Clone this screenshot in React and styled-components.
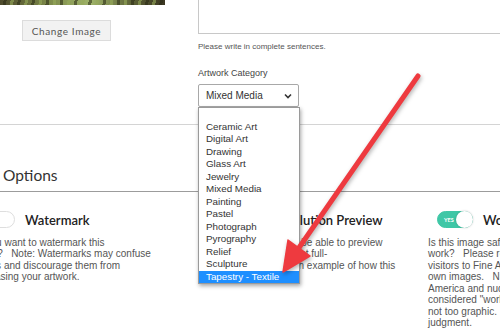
import React from "react"
import styled, { createGlobalStyle } from "styled-components"

const Global = createGlobalStyle`
  html, body {
    margin: 0;
    padding: 0;
    background: #fff;
    overflow: hidden;
  }
  body {
    font-family: "Liberation Sans", Arial, sans-serif;
  }
`

const Frame = styled.div`
  position: relative;
  width: 500px;
  height: 328px;
  overflow: hidden;
`

const TopSection = styled.section`
  margin-top: -60px;
  display: grid;
  grid-template-columns: 198px 1fr;
  padding-bottom: 17px;
  border-bottom: 1px solid #d4d4d4;
`

const ImageCol = styled.div`
  display: flex;
  flex-direction: column;
  align-items: flex-start;
`

const ArtImage = styled.div`
  width: 165px;
  height: 65px;
  background:
    repeating-linear-gradient(
      100deg,
      rgba(40, 40, 20, 0.55) 0 3px,
      transparent 3px 7px,
      rgba(150, 170, 90, 0.6) 7px 10px,
      transparent 10px 14px
    ),
    linear-gradient(90deg, #4d4a2c, #7d8a4a 30%, #9fb36a 55%, #5c6136 80%, #3b3622);
`

const GreyButton = styled.button`
  margin: 15px 0 0 22px;
  width: 89px;
  height: 21px;
  padding: 0;
  background: #f2f2f2;
  border: 1px solid #dcdcdc;
  color: #555;
  font-family: Lato, "Open Sans", sans-serif;
  font-size: 10px;
  letter-spacing: 0.6px;
`

const FormCol = styled.div`
  display: flex;
  flex-direction: column;
  align-items: flex-start;
`

const TextArea = styled.div`
  width: 340px;
  height: 94px;
  box-sizing: border-box;
  border: 1px solid #c8c8c8;
  background: #fff;
`

const Help = styled.div`
  margin-top: 8px;
  font-size: 8px;
  line-height: 10px;
  color: #555;
`

const FieldLabel = styled.div`
  margin-top: 16px;
  font-size: 9px;
  line-height: 11px;
  color: #444;
`

const SelectWrap = styled.div`
  position: relative;
  margin-top: 5px;
`

const SelectBox = styled.div`
  width: 101px;
  height: 23px;
  box-sizing: border-box;
  border: 1px solid #a8a8a8;
  border-radius: 2px;
  display: flex;
  align-items: center;
  justify-content: space-between;
  padding: 0 6px 0 7px;
  font-size: 10px;
  color: #333;
  background: #fff;
`

const DropList = styled.ul`
  position: absolute;
  top: 23px;
  left: 0;
  width: 102px;
  box-sizing: border-box;
  margin: 0;
  padding: 0;
  list-style: none;
  background: #fff;
  border: 1px solid #9a9a9a;
  box-shadow: 1px 2px 4px rgba(0, 0, 0, 0.35);
  z-index: 5;
`

const DropItem = styled.li`
  height: 12.5px;
  line-height: 12.5px;
  padding-left: 7px;
  font-size: 9.8px;
  color: ${p => (p.active ? "#fff" : "#333")};
  background: ${p => (p.active ? "#1e8fff" : "transparent")};
  white-space: nowrap;
`

const OptionsHead = styled.h2`
  margin: 0;
  padding: 40px 0 6px 3px;
  font-family: Lato, "Open Sans", sans-serif;
  font-weight: 400;
  font-size: 15.5px;
  line-height: 20px;
  color: #333;
  border-bottom: 1px solid #9c9c9c;
`

const Columns = styled.div`
  display: grid;
  grid-template-columns: repeat(3, 229px);
  margin-left: -30px;
  padding-top: 19px;
`

const Column = styled.div`
  display: flex;
  flex-direction: column;
`

const ToggleRow = styled.div`
  display: flex;
  align-items: center;
  gap: 10px;
  padding-left: 9px;
  height: 17px;
`

const Toggle = styled.div`
  position: relative;
  flex: none;
  width: 36px;
  height: 17px;
  box-sizing: border-box;
  border-radius: 9px;
  background: ${p => (p.on ? "#3fc7a6" : "#fff")};
  border: 1px solid ${p => (p.on ? "#3fc7a6" : "#dedede")};
  display: flex;
  align-items: center;
  padding: 0 6px;
  font-family: Lato, "Open Sans", sans-serif;
  font-size: 5.5px;
  font-weight: 700;
  color: #fff;
  &::after {
    content: "";
    position: absolute;
    top: -1px;
    ${p => (p.on ? "right: -1px;" : "left: -1px;")}
    width: 17px;
    height: 17px;
    border-radius: 50%;
    background: #fff;
    box-shadow: 0 0 2px rgba(0, 0, 0, 0.25);
  }
`

const OptTitle = styled.div`
  font-family: Lato, "Open Sans", sans-serif;
  font-weight: 600;
  font-size: 13px;
  color: #222;
  white-space: nowrap;
`

const OptText = styled.div`
  margin-top: 9px;
  font-size: 10px;
  line-height: 11.43px;
  color: #555;
  white-space: pre;
`

const ArrowSvg = styled.svg`
  position: absolute;
  left: 0;
  top: 0;
  width: 500px;
  height: 328px;
  pointer-events: none;
  z-index: 10;
  filter: drop-shadow(1px 2px 2px rgba(0, 0, 0, 0.3));
`

const categories = [
  "",
  "Ceramic Art",
  "Digital Art",
  "Drawing",
  "Glass Art",
  "Jewelry",
  "Mixed Media",
  "Painting",
  "Pastel",
  "Photograph",
  "Pyrography",
  "Relief",
  "Sculpture",
  "Tapestry - Textile"
]

const options = [
  {
    title: "Watermark",
    on: false,
    text: "Do you want to watermark this\nimage?   Note: Watermarks may confuse\nvisitors and discourage them from\npurchasing your artwork."
  },
  {
    title: "Hi-Resolution Preview",
    on: false,
    text: "Do you want buyers to be able to preview\nyour complete artwork at full-\nsize, and gives them an example of how this\nlooks."
  },
  {
    title: "Work Safe",
    on: true,
    text: "Is this image safe for\nwork?   Please remember that\nvisitors to Fine Art America\nown images.   Nudity in\nAmerica and nudity is\nconsidered \"work safe\" if\nnot too graphic.   Use your\njudgment."
  }
]

const Chevron = () => (
  <svg width="8" height="6" viewBox="0 0 8 6">
    <path d="M1 1.5 L4 4.5 L7 1.5" fill="none" stroke="#333" strokeWidth="1.6" />
  </svg>
)

export default function App() {
  return (
    <Frame>
      <Global />
      <TopSection>
        <ImageCol>
          <ArtImage />
          <GreyButton>Change Image</GreyButton>
        </ImageCol>
        <FormCol>
          <TextArea />
          <Help>Please write in complete sentences.</Help>
          <FieldLabel>Artwork Category</FieldLabel>
          <SelectWrap>
            <SelectBox>
              Mixed Media
              <Chevron />
            </SelectBox>
            <DropList>
              {categories.map((c, i) => (
                <DropItem key={i} active={c === "Tapestry - Textile"}>
                  {c || "\u00a0"}
                </DropItem>
              ))}
            </DropList>
          </SelectWrap>
        </FormCol>
      </TopSection>

      <OptionsHead>Options</OptionsHead>
      <Columns>
        {options.map(o => (
          <Column key={o.title}>
            <ToggleRow>
              <Toggle on={o.on}>{o.on ? "YES" : null}</Toggle>
              <OptTitle>{o.title}</OptTitle>
            </ToggleRow>
            <OptText>{o.text}</OptText>
          </Column>
        ))}
      </Columns>

      <ArrowSvg viewBox="0 0 500 328">
        <line x1="418" y1="76" x2="296" y2="252" stroke="#ee3a3f" strokeWidth="5" strokeLinecap="round" />
        <polygon points="283,272 310,256 288,240" fill="#ee3a3f" stroke="#ee3a3f" strokeWidth="1.5" strokeLinejoin="round" />
      </ArrowSvg>
    </Frame>
  )
}
